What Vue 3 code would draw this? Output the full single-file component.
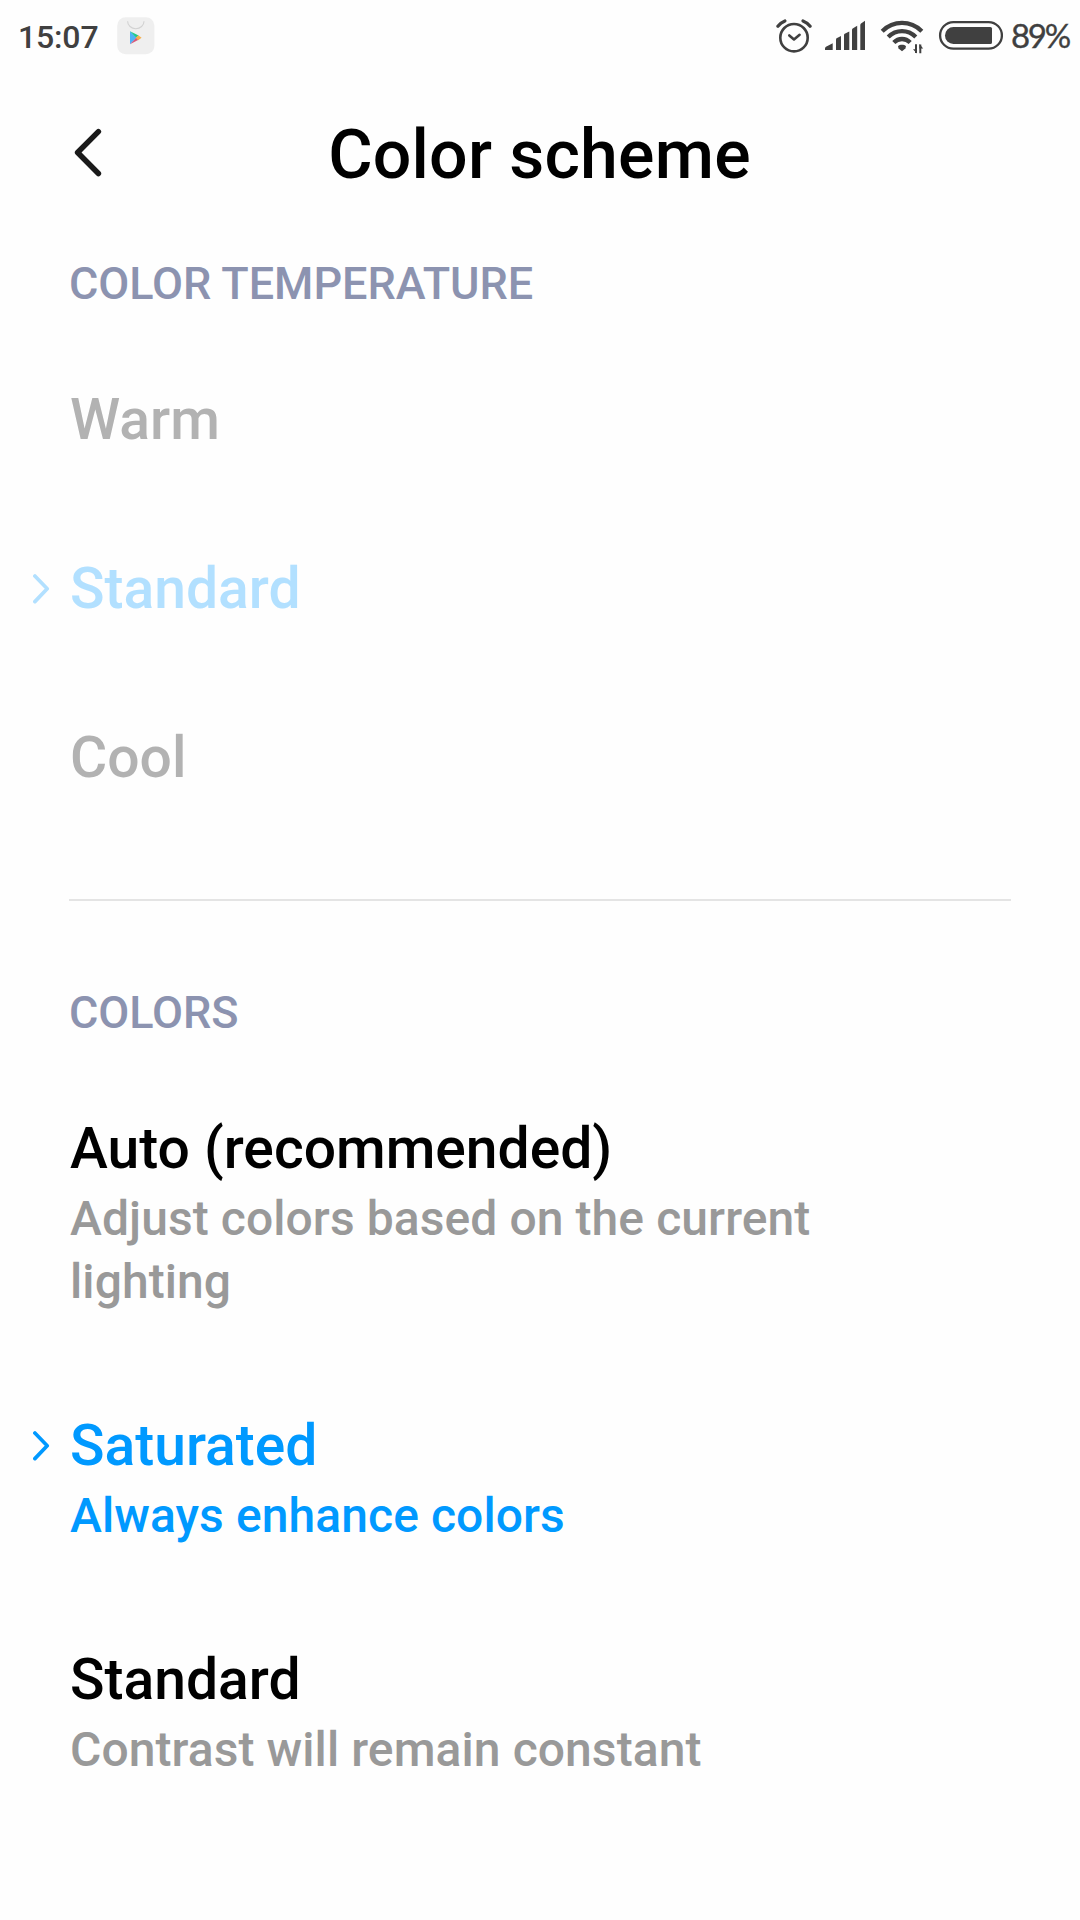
<script setup>
const sections = [
  {
    title: 'COLOR TEMPERATURE',
    disabled: true,
    options: [
      { label: 'Warm' },
      { label: 'Standard', selected: true },
      { label: 'Cool' },
    ],
  },
  {
    title: 'COLORS',
    disabled: false,
    options: [
      { label: 'Auto (recommended)', note: 'Adjust colors based on the current lighting' },
      { label: 'Saturated', note: 'Always enhance colors', selected: true },
      { label: 'Standard', note: 'Contrast will remain constant' },
    ],
  },
]
</script>

<template>
  <div class="screen">
    <div class="status">
      <span class="time">15:07</span>
      <svg class="store" width="38" height="38" viewBox="0 0 38 38">
        <rect x="0.2" y="0.2" width="37.2" height="37" rx="8.5" fill="#efefef" />
        <path d="M10.6 4.2a8.2 7.5 0 0 0 16.4 0" fill="none" stroke="#d2d2d2" stroke-width="1.1" />
        <path d="M13 14.3v13L19.6 20.8Z" fill="#4fb3f6" />
        <path d="M13 14.3L21.6 18.6L19.2 20.8Z" fill="#1fc98b" />
        <path d="M13 27.3L21.6 22.8L19.2 20.8Z" fill="#d8597b" />
        <path d="M21.2 18.2L24.6 20.8L21.2 23.3L18.8 20.8Z" fill="#f5b04e" />
      </svg>

      <svg class="icons" width="230" height="40" viewBox="776 16 230 40" fill="none" stroke="#404040">
        <g stroke-width="2.6" stroke-linecap="round">
          <circle cx="794" cy="37.7" r="13.7" />
          <path d="M789.3 35.4L794 39.4L799.6 34.8" stroke-linejoin="round" />
          <path d="M777.9 26.2Q780.6 22.6 784.9 20.9M803 20.9Q807.4 22.6 810.1 26.2" stroke-width="3.2" />
        </g>
        <g fill="#404040" stroke="none">
          <path d="M825 50V48.4Q825 47.3 826 46.8L832.7 43.2V50Z" />
          <path d="M836 50V39.4Q836 38.6 836.6 38.2L841 36V50Z" />
          <path d="M844 50V35Q844 34.1 844.7 33.7L849.3 31.4V50Z" />
          <path d="M852 50V30Q852 29.1 852.7 28.6L857.2 25.8V50Z" />
          <path d="M860.3 50V25Q860.3 24 861 23.4L865 20.7V50Z" />
        </g>
        <g stroke-width="4.3">
          <path d="M882.2 31.2C893.5 20.2 910.5 20.2 921.8 31.2" />
          <path d="M888.2 37C896.2 29.2 907.8 29.2 915.8 37" />
          <path d="M893.8 42.6C898.4 37.8 905.6 37.8 910.2 42.6" />
        </g>
        <path d="M898 46.2C900 44.4 904 44.4 906 46.2L905.4 48.6L902 51.2L898.6 48.6Z" fill="#404040" stroke="none" />
        <path d="M916 44.2V53M920.3 53.2V44.5" stroke-width="2" />
        <path d="M913 49.2H916.9V53.6ZM919.4 44V48.4H923.2Z" fill="#404040" stroke="none" />
        <rect x="940.1" y="22.1" width="61.8" height="26.6" rx="13.3" stroke-width="2.3" />
        <path d="M953.5 27H990.4Q992 27 992 28.6V42.4Q992 44 990.4 44H953.5A8.5 8.5 0 0 1 953.5 27Z" fill="#404040" stroke="none" />
      </svg>
      <span class="percent">89%</span>
    </div>

    <header class="header">
      <svg class="back" width="32" height="52" viewBox="0 0 32 52">
        <path d="M24.4 5.6L3.6 26.5L24.4 47.5" fill="none" stroke="#1a1a1a" stroke-width="5.5" stroke-linecap="round" stroke-linejoin="round" />
      </svg>
      <h1>Color scheme</h1>
    </header>

    <section v-for="s in sections" :key="s.title" :class="{ disabled: s.disabled }">
      <h2>{{ s.title }}</h2>
      <div v-for="o in s.options" :key="o.label" class="option" :class="{ selected: o.selected }">
        <div class="gutter">
          <svg v-if="o.selected" width="18" height="30" viewBox="0 0 18 30">
            <path d="M1.9 2L14.2 14.8L1.9 27.6" fill="none" stroke="currentColor" stroke-width="3.7" stroke-linecap="round" stroke-linejoin="round" />
          </svg>
        </div>
        <div class="text">
          <div class="label">{{ o.label }}</div>
          <div v-if="o.note" class="note">{{ o.note }}</div>
        </div>
      </div>
    </section>
  </div>
</template>

<style>
body {
  background: #fefefe;
}
</style>

<style scoped>
.screen {
  width: 1080px;
  height: 1920px;
  overflow: hidden;
  background: #fefefe;
  font-family: Roboto, sans-serif;
  font-weight: 500;
  color: #000;
}
.status {
  display: flex;
  align-items: flex-start;
  height: 72px;
  padding: 0 9px 0 18px;
  box-sizing: border-box;
  color: #404040;
}
.time {
  width: 99px;
  margin-top: 18px;
  font-size: 32px;
  letter-spacing: -0.15px;
  line-height: 38px;
}
.store {
  margin-top: 17px;
}
.icons {
  margin: 16px 0 0 auto;
}
.percent {
  width: 65px;
  margin-top: 15px;
  box-sizing: border-box;
  padding-left: 5px;
  font-family: Lato, sans-serif;
  font-size: 33px;
  font-weight: 400;
  line-height: 40px;
  letter-spacing: -2.3px;
  -webkit-text-stroke: 0.35px #404040;
  white-space: nowrap;
}
.header {
  display: flex;
  align-items: center;
  height: 185px;
  padding: 0 74px;
  box-sizing: border-box;
  padding-bottom: 23px;
}
.back {
  flex: none;
  margin-top: -2px;
}
h1 {
  flex: 1;
  margin: 4px 33px 0 0;
  text-align: center;
  font-size: 68px;
  font-weight: 500;
  line-height: 80px;
  letter-spacing: 0.2px;
}
h2 {
  margin: 0;
  height: 78px;
  padding-left: 69px;
  box-sizing: border-box;
  font-size: 45px;
  font-weight: 500;
  line-height: 53px;
  letter-spacing: -0.06px;
  color: #8c93b0;
}
section + section {
  margin-top: 57px;
}
section + section::before {
  content: '';
  display: block;
  height: 2px;
  margin: 0 69px 85px;
  background: #e4e4e4;
}
.option {
  display: flex;
  min-height: 169px;
  box-sizing: border-box;
  padding: 51px 200px 48px 0;
}
.gutter {
  flex: none;
  width: 70px;
  padding: 19px 0 0 33px;
  box-sizing: border-box;
}
.gutter svg {
  display: block;
}
.label {
  font-size: 57px;
  line-height: 67px;
}
.note {
  margin-top: 5px;
  font-size: 48px;
  line-height: 63px;
  letter-spacing: 0.08px;
  color: #999;
}
.selected,
.selected .note {
  color: #0099ff;
}
.disabled .label {
  color: #b2b2b2;
}
.disabled .selected,
.disabled .selected .label {
  color: #b2e0ff;
}
</style>
